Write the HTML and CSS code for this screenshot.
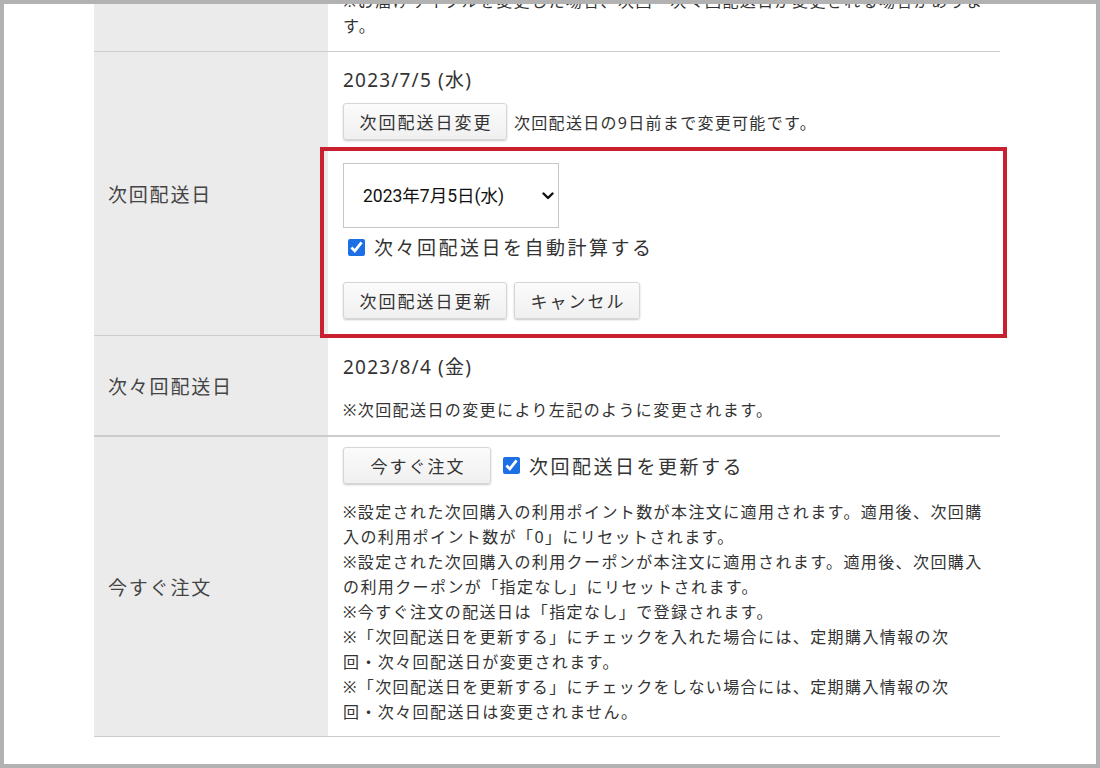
FILE: index.html
```html
<!DOCTYPE html>
<html lang="ja">
<head>
<meta charset="utf-8">
<title>定期購入情報</title>
<link rel="stylesheet" href="styles.css">
</head>
<body>
<div class="screen">
  <div class="table">
    <div class="row row-intro">
      <div class="label"></div>
      <div class="value">
        <p class="notes">※お届けサイクルを変更した場合、次回・次々回配送日が変更される場合がありま<br>す。</p>
      </div>
    </div>

    <div class="row row-next">
      <div class="label">次回配送日</div>
      <div class="value">
        <div class="date">2023/7/5 (水)</div>
        <div class="action-line">
          <button class="btn btn-wide" type="button">次回配送日変更</button>
          <span class="hint">次回配送日の9日前まで変更可能です。</span>
        </div>
        <div class="edit">
          <div class="select-wrap">
            <select class="date-select">
              <option>2023年7月5日(水)</option>
            </select>
            <svg class="chevron" width="12" height="8" viewBox="0 0 12 8"><path d="M1.5 1.5 L6 6 L10.5 1.5" fill="none" stroke="#111" stroke-width="2.4" stroke-linecap="round" stroke-linejoin="round"/></svg>
          </div>
          <label class="check check-auto"><input type="checkbox" checked><span>次々回配送日を自動計算する</span></label>
          <div class="edit-buttons">
            <button class="btn btn-wide" type="button">次回配送日更新</button>
            <button class="btn btn-cancel" type="button">キャンセル</button>
          </div>
        </div>
      </div>
    </div>

    <div class="row row-after">
      <div class="label">次々回配送日</div>
      <div class="value">
        <div class="date date-after">2023/8/4 (金)</div>
        <p class="notes">※次回配送日の変更により左記のように変更されます。</p>
      </div>
    </div>

    <div class="row row-order">
      <div class="label">今すぐ注文</div>
      <div class="value">
        <div class="action-line">
          <button class="btn btn-order" type="button">今すぐ注文</button>
          <label class="check check-update"><input type="checkbox" checked><span>次回配送日を更新する</span></label>
        </div>
        <p class="notes notes-order">※設定された次回購入の利用ポイント数が本注文に適用されます。適用後、次回購<br>入の利用ポイント数が「0」にリセットされます。<br>※設定された次回購入の利用クーポンが本注文に適用されます。適用後、次回購入<br>の利用クーポンが「指定なし」にリセットされます。<br>※今すぐ注文の配送日は「指定なし」で登録されます。<br>※「次回配送日を更新する」にチェックを入れた場合には、定期購入情報の次<br>回・次々回配送日が変更されます。<br>※「次回配送日を更新する」にチェックをしない場合には、定期購入情報の次<br>回・次々回配送日は変更されません。</p>
      </div>
    </div>
  </div>
</div>
</body>
</html>
```

FILE: styles.css
```css
html, body {
  margin: 0;
  padding: 0;
  background: #ffffff;
}

body {
  font-family: "Noto Sans", "Noto Sans CJK JP", sans-serif;
  color: #333333;
}

.screen {
  width: 1100px;
  height: 768px;
  box-sizing: border-box;
  border: 4px solid #b2b2b2;
  overflow: hidden;
  background: #ffffff;
}

.table {
  margin: -24px 0 0 90px;
  width: 906px;
}

.row {
  display: grid;
  grid-template-columns: 234px 672px;
  border-bottom: 1px solid #cccccc;
}

.label {
  background: #ebebeb;
  display: flex;
  align-items: center;
  padding-left: 14px;
  font-size: 19px;
  letter-spacing: 1.8px;
  color: #444444;
}

.value {
  padding: 0 15px;
}

.notes {
  margin: 0;
  font-size: 16px;
  line-height: 25px;
  letter-spacing: 1.4px;
  color: #333333;
  white-space: nowrap;
}

.row-intro .value {
  padding-top: 9px;
  padding-bottom: 12px;
}

.row-next .value {
  padding-top: 14px;
  padding-bottom: 16px;
}

.date {
  font-size: 19px;
  line-height: 28px;
  letter-spacing: 1.2px;
  color: #333333;
}

.action-line {
  display: flex;
  align-items: center;
  margin-top: 9px;
}

.hint {
  margin-left: 7px;
  font-size: 16px;
  letter-spacing: 1.3px;
  color: #333333;
}

.btn {
  height: 37px;
  box-sizing: border-box;
  border: 1px solid #d6d6d6;
  border-radius: 3px;
  background: linear-gradient(#fbfbfb, #f0f0f0);
  box-shadow: 0 1px 2px rgba(0, 0, 0, 0.22);
  font-family: "Noto Sans CJK JP", sans-serif;
  font-size: 17px;
  letter-spacing: 2px;
  color: #333333;
  padding: 0 0 0 2px;
  margin: 0;
  text-align: center;
}

.btn-wide {
  width: 164px;
}

.btn-cancel {
  width: 126px;
  margin-left: 7px;
}

.btn-order {
  width: 148px;
}

.edit {
  position: relative;
  margin-top: 23px;
}

.edit::after {
  content: "";
  position: absolute;
  top: -16px;
  left: -23px;
  right: -22px;
  bottom: -19px;
  border: 4px solid #c8202f;
  pointer-events: none;
  z-index: 2;
}

.select-wrap {
  position: relative;
  width: 216px;
  height: 65px;
}

.date-select {
  appearance: none;
  -webkit-appearance: none;
  width: 216px;
  height: 65px;
  box-sizing: border-box;
  border: 1px solid #c6c6c6;
  border-radius: 0;
  background: #ffffff;
  padding: 0 0 0 19px;
  margin: 0;
  font-family: Roboto, "Noto Sans CJK JP", sans-serif;
  font-size: 17.5px;
  color: #111111;
}

.chevron {
  position: absolute;
  right: 5px;
  top: 29px;
}

.check {
  display: flex;
  align-items: center;
  height: 26px;
  font-size: 19px;
  letter-spacing: 2.5px;
  color: #333333;
}

.check input {
  width: 17px;
  height: 17px;
  margin: 0 9px 0 5px;
  accent-color: #1d6fe6;
}

.check-auto {
  margin-top: 6px;
}

.check-update {
  margin-left: 7px;
}

.edit-buttons {
  display: flex;
  margin-top: 22px;
}

.row-after .value {
  padding-top: 17px;
  padding-bottom: 12px;
}

.row-after {
  border-bottom-width: 2px;
}

.date-after {
  margin-bottom: 17px;
}

.row-order .value {
  padding-top: 10px;
  padding-bottom: 11px;
}

.row-order .action-line {
  margin-top: 0;
}

.notes-order {
  margin-top: 16px;
}
```
